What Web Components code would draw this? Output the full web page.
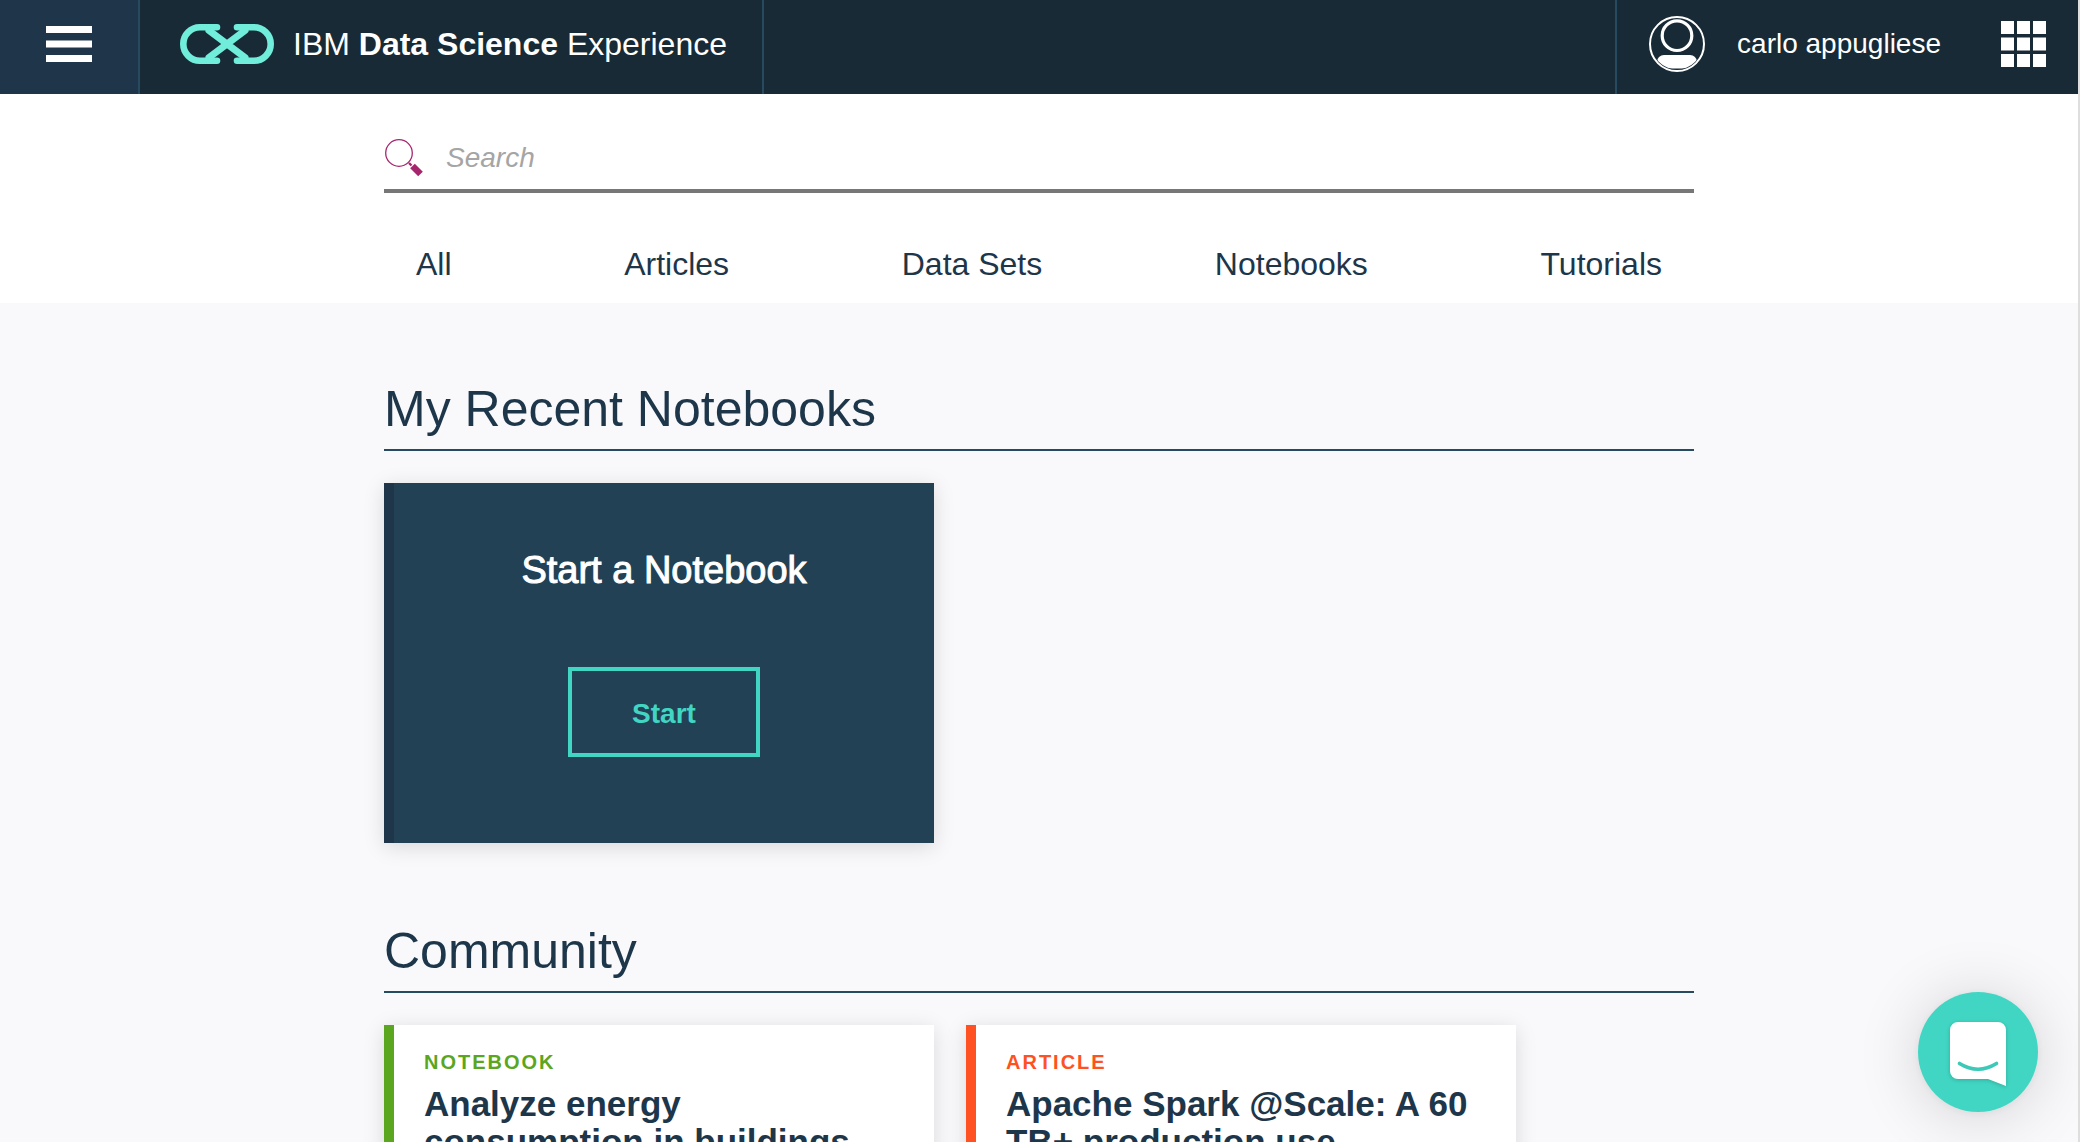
<!DOCTYPE html>
<html lang="en">
<head>
<meta charset="utf-8">
<title>IBM Data Science Experience</title>
<style>
  html, body { margin: 0; height: 100%; }
  body { font-family: "Liberation Sans", Arial, sans-serif; color: #1d364a; background: #f9f9fb; }
</style>
</head>
<body>
<dsx-app>
  <dsx-header slot="header" user="carlo appugliese"></dsx-header>
  <dsx-search slot="search">
    <a href="#all">All</a>
    <a href="#articles">Articles</a>
    <a href="#data-sets">Data Sets</a>
    <a href="#notebooks">Notebooks</a>
    <a href="#tutorials">Tutorials</a>
  </dsx-search>
  <dsx-section heading="My Recent Notebooks">
    <dsx-start-card heading="Start a Notebook" action="Start"></dsx-start-card>
  </dsx-section>
  <dsx-section heading="Community">
    <dsx-card kind="Notebook" style="--accent:#5aa61e">Analyze energy consumption in buildings</dsx-card>
    <dsx-card kind="Article" style="--accent:#ff5121">Apache Spark @Scale: A 60 TB+ production use</dsx-card>
  </dsx-section>
  <dsx-chat slot="chat"></dsx-chat>
</dsx-app>

<script>
class DsxElement extends HTMLElement {
  connectedCallback() {
    if (this.shadowRoot) return;
    this.attachShadow({ mode: "open" }).innerHTML =
      `<style>*{box-sizing:border-box}:host{display:block;box-sizing:border-box}${this.css()}</style>${this.html()}`;
  }
}

customElements.define("dsx-app", class extends DsxElement {
  css() { return `
    :host { height: 100vh; overflow: hidden; border-right: 2px solid #dededf; }
    main { max-width: 1310px; margin: 0 auto; padding-top: 76px; display: flex; flex-direction: column; gap: 78px; }`; }
  html() { return `
    <slot name="header"></slot>
    <slot name="search"></slot>
    <main><slot></slot></main>
    <slot name="chat"></slot>`; }
});

customElements.define("dsx-header", class extends DsxElement {
  css() { return `
    :host { background: #172a35; color: #fff; }
    header { display: flex; height: 94px; }
    button { border: 0; padding: 0; background: none; color: inherit; font: inherit; display: flex; cursor: pointer; }
    svg { display: block; flex: none; }
    .menu { width: 140px; padding: 0 0 6px; align-items: center; justify-content: center; background: #1f364a; border-right: 2px solid #264a60; }
    .brand { display: flex; align-items: center; gap: 19px; padding: 0 35px 6px 40px; border-right: 2px solid #264a60; color: inherit; text-decoration: none; font-size: 32px; white-space: nowrap; }
    .user { margin-left: auto; display: flex; align-items: center; padding: 0 32px 6px; border-left: 2px solid #264a60; gap: 60px; }
    .account { align-items: center; gap: 32px; font-size: 28px; white-space: nowrap; }`; }
  html() { return `
    <header>
      <button class="menu" aria-label="Menu">
        <svg width="46" height="36" fill="#fff"><path d="M0 0h46v7H0zM0 14.500h46v7H0zM0 29h46v7H0z"/></svg>
      </button>
      <a class="brand" href="#home">
        <svg width="94" height="40" fill="none" stroke="#71eedb" stroke-width="6.600" stroke-linecap="round" aria-hidden="true">
          <path d="M37 3.300H20a16.700 16.700 0 0 0 0 33.400h17M57 3.300h17a16.700 16.700 0 0 1 0 33.400H57"/>
          <path stroke-width="7" d="M29 6.500l36 27M65 6.500L29 33.500"/>
        </svg>
        <span>IBM <b>Data Science</b> Experience</span>
      </a>
      <div class="user">
        <button class="account">
          <svg width="56" height="56" viewBox="0 0 56 56" fill="none" stroke="#fff" aria-hidden="true">
            <clipPath id="c"><circle cx="28" cy="28" r="25.500"/></clipPath>
            <circle cx="28" cy="28" r="27" stroke-width="2"/>
            <circle cx="28" cy="19.700" r="14.800" stroke-width="3.200"/>
            <rect x="8" y="39" width="40" height="13.500" rx="7" fill="#fff" stroke="none" clip-path="url(#c)"/>
          </svg>
          <span>${this.getAttribute("user")}</span>
        </button>
        <button aria-label="Apps">
          <svg width="45" height="46" fill="#fff">
            <path d="M0 0h13v13H0zM16 0h13v13H16zM32 0h13v13H32zM0 16.500h13v13H0zM16 16.500h13v13H16zM32 16.500h13v13H32zM0 33h13v13H0zM16 33h13v13H16zM32 33h13v13H32z"/>
          </svg>
        </button>
      </div>
    </header>`; }
});

customElements.define("dsx-search", class extends DsxElement {
  css() { return `
    :host { background: #fff; padding: 32px 0 19px; }
    .inner { max-width: 1310px; margin: 0 auto; }
    .field { display: flex; align-items: center; gap: 22px; height: 67px; border-bottom: 4px solid #777; }
    label, svg { display: block; }
    input { flex: 1; min-width: 0; border: 0; outline: 0; padding: 0; background: none; font: 28px/36px "Liberation Sans", Arial, sans-serif; color: #1d364a; }
    input::placeholder { color: #a5a5a5; font-style: italic; opacity: 1; }
    nav { display: flex; justify-content: space-between; margin-top: 51px; padding: 0 32px; }
    ::slotted(a) { font-size: 32px; line-height: 40px; color: #1d364a; text-decoration: none; }`; }
  html() { return `
    <div class="inner">
      <div class="field">
        <label for="q" aria-label="Search">
          <svg width="40" height="38" fill="none" stroke="#a6266e" aria-hidden="true">
            <circle cx="15" cy="14" r="13.300" stroke-width="1.300"/>
            <path d="M25 24l2.500 2.500" stroke-width="2.400"/>
            <path d="M28.500 27l8 8" stroke-width="6.500"/>
          </svg>
        </label>
        <input id="q" type="text" placeholder="Search">
      </div>
      <nav><slot></slot></nav>
    </div>`; }
});

customElements.define("dsx-section", class extends DsxElement {
  css() { return `
    h2 { margin: 0 0 32px; padding-bottom: 10px; border-bottom: 2px solid #264a60; font-size: 50px; line-height: 60px; font-weight: 400; }
    .cards { display: flex; gap: 32px; }`; }
  html() { return `
    <section><h2>${this.getAttribute("heading")}</h2><div class="cards"><slot></slot></div></section>`; }
});

const cardBox = `flex: 0 0 550px; height: 360px; box-shadow: 0 4px 20px rgba(0,0,0,.13);`;

customElements.define("dsx-start-card", class extends DsxElement {
  css() { return `
    :host { ${cardBox} background: #234155; border-left: 10px solid #1f364a; color: #fff; padding-top: 64px; text-align: center; }
    h3 { margin: 0 0 74px; font-size: 38px; line-height: 46px; font-weight: 400; -webkit-text-stroke: 1px currentColor; }
    button { width: 192px; height: 90px; padding: 4px 0 0; border: 4px solid #41d6c3; background: none; color: #41d6c3; font: bold 28px "Liberation Sans", Arial, sans-serif; cursor: pointer; }`; }
  html() { return `
    <h3>${this.getAttribute("heading")}</h3>
    <button>${this.getAttribute("action")}</button>`; }
});

customElements.define("dsx-card", class extends DsxElement {
  css() { return `
    :host { ${cardBox} background: #fff; border-left: 10px solid var(--accent); padding: 25px 30px; }
    p { margin: 0 0 11px; color: var(--accent); font-size: 20px; line-height: 24px; font-weight: 700; letter-spacing: 2px; text-transform: uppercase; }
    h3 { margin: 0; font-size: 35px; line-height: 38px; font-weight: 700; }`; }
  html() { return `
    <p>${this.getAttribute("kind")}</p>
    <h3><slot></slot></h3>`; }
});

customElements.define("dsx-chat", class extends DsxElement {
  css() { return `
    :host { position: fixed; right: 42px; bottom: 30px; }
    button { display: block; width: 120px; height: 120px; padding: 0; border: 0; border-radius: 50%; background: #41d6c3; box-shadow: 0 1px 10px rgba(0,0,0,.06), 0 4px 64px rgba(0,0,0,.16); cursor: pointer; }
    svg { display: block; filter: drop-shadow(0 1px 2px rgba(0,0,0,.2)); }`; }
  html() { return `
    <button aria-label="Open chat">
      <svg width="120" height="120" aria-hidden="true">
        <path fill="#fff" d="M40 30h40a8 8 0 0 1 8 8v56l-18-7H40a8 8 0 0 1-8-8V38a8 8 0 0 1 8-8z"/>
        <path fill="none" stroke="#3cc9b7" stroke-width="3.600" stroke-linecap="round" d="M41.500 71.500q18.500 11.500 37 0"/>
      </svg>
    </button>`; }
});
</script>
</body>
</html>
